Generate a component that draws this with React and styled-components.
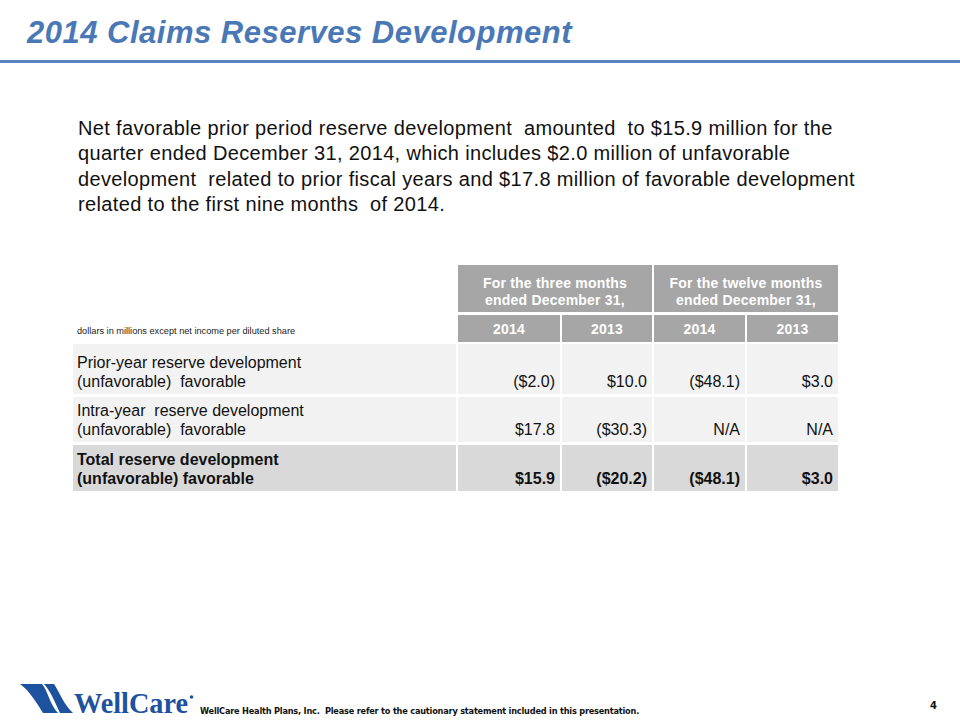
import React from 'react';
import styled, { createGlobalStyle } from 'styled-components';

const GlobalStyle = createGlobalStyle`
  html, body {
    margin: 0;
    padding: 0;
    background: #ffffff;
  }
`;

const summary = [
  'Net favorable prior period reserve development\u00a0 amounted\u00a0 to $15.9 million for the',
  'quarter ended December 31, 2014, which includes $2.0 million of unfavorable',
  'development\u00a0 related to prior fiscal years and $17.8 million of favorable development',
  'related to the first nine months\u00a0 of 2014.',
];

const rows = [
  { label: ['Prior-year reserve development', '(unfavorable)\u00a0 favorable'], values: ['($2.0)', '$10.0', '($48.1)', '$3.0'], height: 50 },
  { label: ['Intra-year\u00a0 reserve development', '(unfavorable)\u00a0 favorable'], values: ['$17.8', '($30.3)', 'N/A', 'N/A'], height: 45 },
  { label: ['Total reserve development', '(unfavorable) favorable'], values: ['$15.9', '($20.2)', '($48.1)', '$3.0'], height: 46, total: true },
];

const years = ['2014', '2013', '2014', '2013'];

const Logo = () => (
  <LogoSvg viewBox="0 0 180 34" width="180" height="34">
    <path d="M2 1 L24 1 C30 8, 32 22, 40 30 L25 30 C20 22, 12 8, 2 1 Z" />
    <path d="M26 1 L36 1 C42 10, 46 22, 55 30 L42 30 C38 22, 34 10, 26 1 Z" />
    <text x="56" y="30" textLength="114" lengthAdjust="spacingAndGlyphs">WellCare</text>
    <circle cx="173.5" cy="14" r="1.8" />
  </LogoSvg>
);

const App = () => {
  return (
    <>
      <GlobalStyle />
      <Page>
        <Title>2014 Claims Reserves Development</Title>
        <Rule />
        <Summary>
          {summary.map((line, i) => <Line key={i}>{line}</Line>)}
        </Summary>

        <Table>
          <Blank />
          <GroupHead span={2}>For the three months<br />ended December 31,</GroupHead>
          <GroupHead span={2}>For the twelve months<br />ended December 31,</GroupHead>

          <Note>dollars in millions except net income per diluted share</Note>
          {years.map((y, i) => <YearHead key={i}>{y}</YearHead>)}

          {rows.map((row, r) => (
            <React.Fragment key={r}>
              <Label total={row.total} style={{ height: row.height }}>
                {row.label[0]}<br />{row.label[1]}
              </Label>
              {row.values.map((v, i) => (
                <Value key={i} total={row.total}>{v}</Value>
              ))}
            </React.Fragment>
          ))}
        </Table>

        <Footer>
          <Logo />
          <Disclaimer>WellCare Health Plans, Inc.&nbsp; Please refer to the cautionary statement included in this presentation.</Disclaimer>
          <PageNumber>4</PageNumber>
        </Footer>
      </Page>
    </>
  );
};

const Page = styled.div`
  width: 960px;
  height: 720px;
  display: flex;
  flex-direction: column;
  overflow: hidden;
  font-family: 'Liberation Sans', Arial, sans-serif;
  color: #000000;
`;

const Title = styled.h1`
  margin: 0;
  padding: 16px 0 0 27px;
  font-size: 31px;
  line-height: 34px;
  font-weight: bold;
  font-style: italic;
  letter-spacing: 0.5px;
  color: #4a78b6;
`;

const Rule = styled.div`
  margin-top: 10px;
  height: 3px;
  background: #5682bd;
`;

const Summary = styled.div`
  margin: 53px 0 0 78px;
  font-size: 20px;
  line-height: 25.3px;
  letter-spacing: 0.35px;
  color: #111111;
`;

const Line = styled.div`
  white-space: nowrap;
`;

const Table = styled.div`
  margin: 48px 0 0 73px;
  display: grid;
  grid-template-columns: 383px 102px 90px 91px 91px;
  grid-template-rows: 47px 26px auto auto auto;
  column-gap: 2px;
  row-gap: 3px;
  width: 765px;
`;

const Blank = styled.div``;

const Head = styled.div`
  background: #a6a6a6;
  color: #ffffff;
  font-weight: bold;
  font-size: 14px;
  letter-spacing: 0.2px;
  text-align: center;
  display: flex;
  flex-direction: column;
  justify-content: center;
`;

const GroupHead = styled(Head)`
  grid-column: span ${props => props.span};
  justify-content: flex-end;
  line-height: 17px;
  padding-bottom: 3px;
`;

const YearHead = styled(Head)`
  line-height: 16px;
  margin-bottom: -1px;
`;

const Note = styled.div`
  font-size: 9.2px;
  color: #222222;
  padding-left: 4px;
  display: flex;
  align-items: center;
  padding-top: 6px;
`;

const Cell = styled.div`
  background: ${props => props.total ? '#d9d9d9' : '#f2f2f2'};
  font-weight: ${props => props.total ? 'bold' : 'normal'};
  font-size: 16px;
  line-height: 19px;
  color: #111111;
  display: flex;
  flex-direction: column;
  justify-content: flex-end;
  padding-bottom: 3px;
  box-sizing: border-box;
`;

const Label = styled(Cell)`
  padding-left: 4px;
`;

const Value = styled(Cell)`
  text-align: right;
  padding-right: 5px;
`;

const Footer = styled.div`
  margin-top: auto;
  display: flex;
  align-items: flex-end;
  padding: 0 0 3px 18px;
`;

const LogoSvg = styled.svg`
  display: block;
  fill: #1d529e;
  flex-shrink: 0;
  overflow: visible;

  text {
    font-family: 'Liberation Serif', 'Times New Roman', serif;
    font-weight: bold;
    font-size: 30px;
  }
`;

const Disclaimer = styled.div`
  margin-left: 2px;
  margin-bottom: 1px;
  font-family: 'DejaVu Sans', Verdana, sans-serif;
  font-weight: bold;
  font-size: 8.2px;
  letter-spacing: -0.2px;
  color: #111111;
  white-space: nowrap;
`;

const PageNumber = styled.div`
  margin-left: auto;
  margin-right: 23px;
  margin-bottom: 6px;
  font-family: 'DejaVu Sans', Verdana, sans-serif;
  font-weight: bold;
  font-size: 10px;
  color: #111111;
`;

export default App;
